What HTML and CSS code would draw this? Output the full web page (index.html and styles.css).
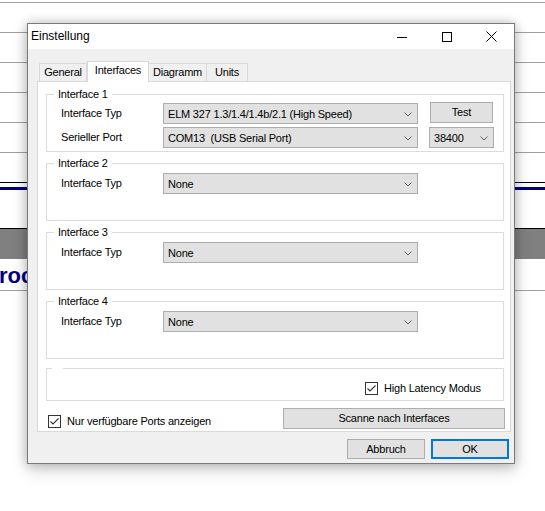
FILE: index.html
```html
<!DOCTYPE html>
<html>
<head>
<meta charset="utf-8">
<link rel="stylesheet" href="styles.css">
</head>
<body>
<div class="desk">
  <div class="bg">
    <div class="bl first"></div>
    <div class="bl"></div>
    <div class="bl"></div>
    <div class="bl"></div>
    <div class="bl"></div>
    <div class="bl"></div>
    <div class="bl dark"></div>
    <div class="navy"></div>
    <div class="band"></div>
    <div class="heading"><span>roc</span></div>
  </div>

  <div class="dialog">
    <div class="titlebar">
      <span class="title">Einstellung</span>
      <div class="ctrls">
        <span class="ctrl"><svg width="10" height="10" viewBox="0 0 10 10"><line x1="0" y1="5.5" x2="10" y2="5.5" stroke="#000" stroke-width="1"/></svg></span>
        <span class="ctrl"><svg width="10" height="10" viewBox="0 0 10 10"><rect x="0.5" y="0.5" width="9" height="9" fill="none" stroke="#000" stroke-width="1"/></svg></span>
        <span class="ctrl"><svg width="11" height="11" viewBox="0 0 11 11"><path d="M0.5 0.5 L10.5 10.5 M10.5 0.5 L0.5 10.5" stroke="#000" stroke-width="1" fill="none"/></svg></span>
      </div>
    </div>

    <div class="body">
      <div class="tabs">
        <div class="tab t-general">General</div>
        <div class="tab t-interfaces active">Interfaces</div>
        <div class="tab t-diagramm">Diagramm</div>
        <div class="tab t-units">Units</div>
      </div>

      <div class="panel">
        <div class="group g1">
          <span class="legend">Interface 1</span>
          <div class="row">
            <span class="lbl">Interface Typ</span>
            <div class="combo wide"><span>ELM 327 1.3/1.4/1.4b/2.1 (High Speed)</span><svg class="chev" width="8" height="5" viewBox="0 0 8 5"><polyline points="0.5,0.5 4,4 7.5,0.5" fill="none" stroke="#606060" stroke-width="1"/></svg></div>
            <div class="btn test">Test</div>
          </div>
          <div class="row r2">
            <span class="lbl">Serieller Port</span>
            <div class="combo wide"><span>COM13&nbsp; (USB Serial Port)</span><svg class="chev" width="8" height="5" viewBox="0 0 8 5"><polyline points="0.5,0.5 4,4 7.5,0.5" fill="none" stroke="#606060" stroke-width="1"/></svg></div>
            <div class="combo baud"><span>38400</span><svg class="chev" width="8" height="5" viewBox="0 0 8 5"><polyline points="0.5,0.5 4,4 7.5,0.5" fill="none" stroke="#606060" stroke-width="1"/></svg></div>
          </div>
        </div>

        <div class="group">
          <span class="legend">Interface 2</span>
          <div class="row">
            <span class="lbl">Interface Typ</span>
            <div class="combo wide"><span>None</span><svg class="chev" width="8" height="5" viewBox="0 0 8 5"><polyline points="0.5,0.5 4,4 7.5,0.5" fill="none" stroke="#606060" stroke-width="1"/></svg></div>
          </div>
        </div>

        <div class="group">
          <span class="legend">Interface 3</span>
          <div class="row">
            <span class="lbl">Interface Typ</span>
            <div class="combo wide"><span>None</span><svg class="chev" width="8" height="5" viewBox="0 0 8 5"><polyline points="0.5,0.5 4,4 7.5,0.5" fill="none" stroke="#606060" stroke-width="1"/></svg></div>
          </div>
        </div>

        <div class="group">
          <span class="legend">Interface 4</span>
          <div class="row">
            <span class="lbl">Interface Typ</span>
            <div class="combo wide"><span>None</span><svg class="chev" width="8" height="5" viewBox="0 0 8 5"><polyline points="0.5,0.5 4,4 7.5,0.5" fill="none" stroke="#606060" stroke-width="1"/></svg></div>
          </div>
        </div>

        <div class="group g5">
          <span class="legend empty"></span>
          <div class="chkrow">
            <span class="chk">
              <span class="box"><svg width="11" height="11" viewBox="0 0 11 11"><polyline points="1.5,5.5 4,8 9.5,2.5" fill="none" stroke="#333" stroke-width="1.1"/></svg></span>
              <span class="chktext">High Latency Modus</span>
            </span>
          </div>
        </div>

        <div class="bottomrow">
          <span class="chk">
            <span class="box"><svg width="11" height="11" viewBox="0 0 11 11"><polyline points="1.5,5.5 4,8 9.5,2.5" fill="none" stroke="#333" stroke-width="1.1"/></svg></span>
            <span class="chktext">Nur verfügbare Ports anzeigen</span>
          </span>
          <div class="btn scan">Scanne nach Interfaces</div>
        </div>
      </div>

      <div class="footer">
        <div class="btn fbtn">Abbruch</div>
        <div class="btn fbtn ok">OK</div>
      </div>
    </div>
  </div>
</div>
</body>
</html>
```

FILE: styles.css
```css
* { box-sizing: border-box; }
html, body { margin: 0; padding: 0; }
body {
  width: 545px;
  height: 511px;
  overflow: hidden;
  background: #fff;
  font-family: "Liberation Sans", Arial, sans-serif;
  font-size: 11px;
  color: #000;
}
.desk { position: relative; width: 545px; height: 511px; overflow: hidden; }

/* background application */
.bg { display: flex; flex-direction: column; }
.bl { height: 30px; border-bottom: 1px solid #a0a0a0; }
.bl.first { height: 3px; }
.bl.dark { border-bottom-color: #000; }
.navy { height: 3px; margin-top: 4px; background: #000080; }
.band { height: 31px; margin-top: 38px; border-top: 1px solid #000; background: #808080; }
.heading {
  height: 32px;
  border-bottom: 1px solid #a0a0a0;
  font-weight: bold;
  font-size: 22px;
  color: #000080;
  line-height: 30px;
  padding-top: 2px;
  overflow: hidden;
  white-space: nowrap;
}
.heading span { margin-left: -1px; }

/* dialog window */
.dialog {
  position: absolute;
  left: 27px;
  top: 23px;
  width: 488px;
  height: 441px;
  border: 1px solid #7a7a7a;
  background: #f0f0f0;
  box-shadow: 0 0 10px rgba(0,0,0,0.22), 0 6px 16px rgba(0,0,0,0.18);
  display: flex;
  flex-direction: column;
  letter-spacing: -0.2px;
}
.titlebar {
  height: 25px;
  background: #fff;
  display: flex;
  align-items: center;
}
.title { padding-left: 3px; padding-bottom: 1px; font-size: 12px; flex: 1; letter-spacing: 0; }
.ctrls { display: flex; height: 25px; }
.ctrl { width: 45px; height: 25px; display: flex; align-items: center; justify-content: center; }
.ctrl svg { display: block; }

.body { flex: 1; padding: 12px 3px 0 9px; display: flex; flex-direction: column; }

.tabs { display: flex; align-items: flex-end; height: 20px; margin-left: 2px; position: relative; z-index: 1; }
.tab {
  height: 18px;
  border: 1px solid #d9d9d9;
  border-bottom: none;
  background: #f0f0f0;
  display: flex;
  align-items: center;
  justify-content: center;
  padding-bottom: 1px;
}
.tab + .tab { border-left: none; }
.t-general { width: 48px; }
.t-interfaces { width: 62px; }
.t-diagramm { width: 58px; }
.t-units { width: 41px; }
.tab.active {
  height: 21px;
  margin-bottom: -1px;
  background: #fff;
  padding-bottom: 5px;
  border-left: 1px solid #d9d9d9;
}

.panel {
  height: 351px;
  border: 1px solid #d9d9d9;
  background: #fff;
  padding: 0 0 0 8px;
  display: flex;
  flex-direction: column;
}

.group {
  position: relative;
  width: 458px;
  height: 58px;
  margin-top: 11px;
  border: 1px solid #dcdcdc;
  padding: 9px 0 0 14px;
}
.group.g1 { margin-top: 12px; padding-top: 8px; }
.group.g5 { margin-top: 9px; height: 33px; padding: 0; }
.legend {
  position: absolute;
  left: 7px;
  top: -7px;
  padding: 0 4px;
  background: #fff;
  line-height: 13px;
  height: 13px;
}
.legend.empty { width: 11px; left: 5px; }

.row { display: flex; align-items: center; height: 21px; }
.row.r2 { margin-top: 3px; }
.lbl { width: 102px; padding-bottom: 1px; }

.combo {
  height: 21px;
  background: #e1e1e1;
  border: 1px solid #adadad;
  display: flex;
  align-items: center;
  padding: 0 5px 0 4px;
  white-space: nowrap;
}
.combo span { flex: 1; overflow: hidden; }
.combo .chev { display: block; margin-top: 1px; }
.combo.wide { width: 255px; }
.combo.baud { width: 65px; margin-left: 11px; }

.btn {
  background: #e1e1e1;
  border: 1px solid #adadad;
  display: flex;
  align-items: center;
  justify-content: center;
  white-space: nowrap;
}
.btn.test { width: 63px; height: 21px; margin-left: 12px; margin-top: -2px; padding-bottom: 1px; }

.chkrow { padding: 13px 0 0 318px; }
.chk { display: flex; align-items: center; }
.box {
  width: 13px;
  height: 13px;
  border: 1px solid #333;
  background: #fff;
  display: block;
}
.box svg { display: block; }
.chktext { margin-left: 6px; line-height: 13px; }

.bottomrow { display: flex; margin-top: 7px; height: 21px; }
.bottomrow .chk { margin: 6px 0 0 2px; }
.btn.scan { width: 222px; height: 21px; margin-left: auto; margin-right: 5px; padding-bottom: 1px; }

.footer { display: flex; justify-content: flex-end; gap: 6px; padding: 7px 2px 0 0; }
.fbtn { width: 78px; height: 20px; padding-bottom: 1px; }
.fbtn.ok { border: 2px solid #0078d7; }
```
